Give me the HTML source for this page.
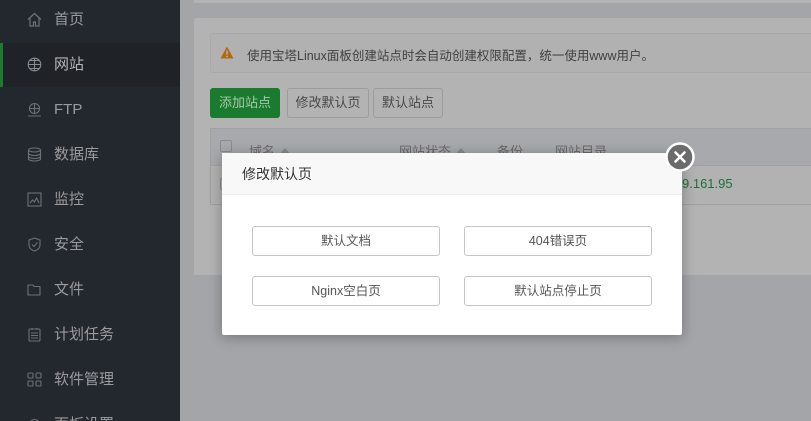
<!DOCTYPE html>
<html><head><meta charset="utf-8"><style>
*{margin:0;padding:0;box-sizing:border-box}
html{width:811px;height:421px;overflow:hidden}
body{width:811px;height:421px;overflow:hidden;position:relative;background:#a4a5a8;font-family:"Liberation Sans","Noto Sans CJK SC",sans-serif;font-size:13px}
.sb{position:absolute;left:0;top:0;width:180px;height:421px;background:#23272e;overflow:hidden}
.it{position:absolute;left:0;width:180px;height:44px;color:#9a9b9d;font-size:15px;line-height:44px;padding-left:54px}
.it.act{background:#1f2227;color:#b5b6b8;border-left:3px solid #1e7a2e;padding-left:51px}
.ic{position:absolute;left:27px;top:14px;width:15px;height:15px}
.a{position:absolute}
.btn{position:absolute;border:1px solid #c6c6c6;border-radius:3px;background:#fff;color:#555;text-align:center;font-size:12.5px}
.tri{display:inline-block;width:0;height:0;border-left:6px solid transparent;border-right:6px solid transparent;border-bottom:7px solid #8a8a8a;margin-left:4px;vertical-align:1px}
</style></head><body>
<div class="sb">
<div class="it" style="top:-2px"><svg class="ic" viewBox="0 0 15 15" fill="none" stroke="#6e7176" stroke-width="1.2"><path d="M1 7.5L7.5 1.5 14 7.5M3 6v8h3.5v-4h2v4H12V6"/></svg>首页</div>
<div class="it act" style="top:43px"><svg class="ic" style="left:24px" viewBox="0 0 15 15" fill="none" stroke="#8a8c90" stroke-width="1.1"><circle cx="7.5" cy="7.5" r="6.3"/><path d="M1.2 7.5h12.6M7.5 1.2v12.6M3 3.5h9M3 11.5h9"/></svg>网站</div>
<div class="it" style="top:88px"><svg class="ic" viewBox="0 0 15 15" fill="none" stroke="#6e7176" stroke-width="1.1"><circle cx="7.5" cy="6.5" r="5"/><path d="M2.5 6.5h10M7.5 1.5v10M1 14h13"/></svg>FTP</div>
<div class="it" style="top:133px"><svg class="ic" viewBox="0 0 15 15" fill="none" stroke="#6e7176" stroke-width="1.1"><ellipse cx="7.5" cy="3" rx="6" ry="2"/><path d="M1.5 3v9c0 1.1 2.7 2 6 2s6-.9 6-2V3M1.5 6.5c0 1.1 2.7 2 6 2s6-.9 6-2M1.5 9.5c0 1.1 2.7 2 6 2s6-.9 6-2"/></svg>数据库</div>
<div class="it" style="top:178px"><svg class="ic" viewBox="0 0 15 15" fill="none" stroke="#6e7176" stroke-width="1.1"><rect x="1" y="1" width="13" height="13"/><path d="M3 11l2.5-3 2 2 2-4L12 11"/></svg>监控</div>
<div class="it" style="top:223px"><svg class="ic" viewBox="0 0 15 15" fill="none" stroke="#6e7176" stroke-width="1.1"><path d="M7.5 1L2 3v5c0 3 2.5 5 5.5 6 3-1 5.5-3 5.5-6V3z"/><path d="M5 7.5l2 2 3.5-4"/></svg>安全</div>
<div class="it" style="top:268px"><svg class="ic" viewBox="0 0 15 15" fill="none" stroke="#6e7176" stroke-width="1.1"><path d="M1 3h5l1 1.5h6V13H1z"/></svg>文件</div>
<div class="it" style="top:313px"><svg class="ic" viewBox="0 0 15 15" fill="none" stroke="#6e7176" stroke-width="1.1"><rect x="2" y="2" width="11" height="12" rx="1"/><path d="M4 6h7M4 8.5h7M4 11h7M5 1v2M10 1v2"/></svg>计划任务</div>
<div class="it" style="top:358px"><svg class="ic" viewBox="0 0 15 15" fill="none" stroke="#6e7176" stroke-width="1.1"><rect x="1" y="1" width="5" height="5" rx="1"/><rect x="9" y="1" width="5" height="5" rx="1"/><rect x="1" y="9" width="5" height="5" rx="1"/><rect x="9" y="9" width="5" height="5" rx="1"/></svg>软件管理</div>
<div class="it" style="top:403px;height:18px;overflow:hidden"><svg class="ic" viewBox="0 0 15 15" fill="none" stroke="#6e7176" stroke-width="1.1"><circle cx="7.5" cy="7.5" r="5"/></svg>面板设置</div>
</div>
<div class="a" style="left:194px;top:0;width:617px;height:3px;background:#b3b3b3"></div>
<div class="a" style="left:194px;top:18px;width:617px;height:257px;background:#b3b3b3"></div>
<div class="a" style="left:210px;top:33px;width:601px;height:40px;border:1px solid #a9a9a9;border-right:none;border-radius:3px 0 0 3px;background:#b1b1b1"></div>
<svg class="a" style="left:220px;top:46px" width="14" height="13" viewBox="0 0 14 13"><path d="M7 0.5L13.5 12.5H0.5z" fill="#b16a0c"/><path d="M7 4.5v4" stroke="#b3b3b3" stroke-width="1.6"/><circle cx="7" cy="10.5" r=".9" fill="#b3b3b3"/></svg>
<div class="a" style="left:247px;top:45px;color:#404040;font-size:12.5px">使用宝塔Linux面板创建站点时会自动创建权限配置，统一使用www用户。</div>
<div class="a" style="left:210px;top:88px;width:70px;height:30px;background:#1a7a2f;border-radius:3px;color:#a9c8ae;font-size:13px;line-height:30px;text-align:center">添加站点</div>
<div class="a" style="left:287px;top:88px;width:82px;height:30px;border:1px solid #9c9c9c;border-radius:3px;color:#484848;line-height:28px;text-align:center">修改默认页</div>
<div class="a" style="left:373px;top:88px;width:70px;height:30px;border:1px solid #9c9c9c;border-radius:3px;color:#484848;line-height:28px;text-align:center">默认站点</div>
<div class="a" style="left:210px;top:128px;width:601px;height:77px;border:1px solid #a0a0a0;border-right:none;background:#b2b2b2"></div>
<div class="a" style="left:211px;top:129px;width:600px;height:37px;background:#a8a9ac;border-bottom:1px solid #a0a0a0"></div>
<div class="a" style="left:220px;top:140px;width:12px;height:12px;border:1px solid #8c8c8c;border-radius:2px"></div>
<div class="a" style="left:249px;top:141px;color:#6a6a6a">域名<span class="tri"></span></div>
<div class="a" style="left:399px;top:141px;color:#6a6a6a">网站状态<span class="tri"></span></div>
<div class="a" style="left:497px;top:141px;color:#6a6a6a">备份</div>
<div class="a" style="left:555px;top:141px;color:#6a6a6a">网站目录</div>
<div class="a" style="left:220px;top:178px;width:12px;height:12px;border:1px solid #8c8c8c;border-radius:2px"></div>
<div class="a" style="left:682px;top:176px;color:#1e6e3c">9.161.95</div>
<div class="a" style="left:222px;top:153px;width:460px;height:182px;background:#fff;border-radius:2px;box-shadow:0 2px 14px rgba(0,0,0,.3)"></div>
<div class="a" style="left:222px;top:153px;width:460px;height:42px;background:#f8f8f8;border-bottom:1px solid #eee;color:#333;font-size:14px;line-height:42px;padding-left:20px">修改默认页</div>
<div class="btn" style="left:252px;top:226px;width:188px;height:30px;line-height:28px">默认文档</div>
<div class="btn" style="left:464px;top:226px;width:188px;height:30px;line-height:28px">404错误页</div>
<div class="btn" style="left:252px;top:276px;width:188px;height:30px;line-height:28px">Nginx空白页</div>
<div class="btn" style="left:464px;top:276px;width:188px;height:30px;line-height:28px">默认站点停止页</div>
<svg class="a" style="left:665px;top:142px" width="30" height="30" viewBox="0 0 30 30"><circle cx="15" cy="15" r="13.5" fill="#6b6b6b" stroke="#fff" stroke-width="2.5"/><path d="M10.5 10.5l9 9M19.5 10.5l-9 9" stroke="#fff" stroke-width="2.6" stroke-linecap="round"/></svg>
</body></html>
